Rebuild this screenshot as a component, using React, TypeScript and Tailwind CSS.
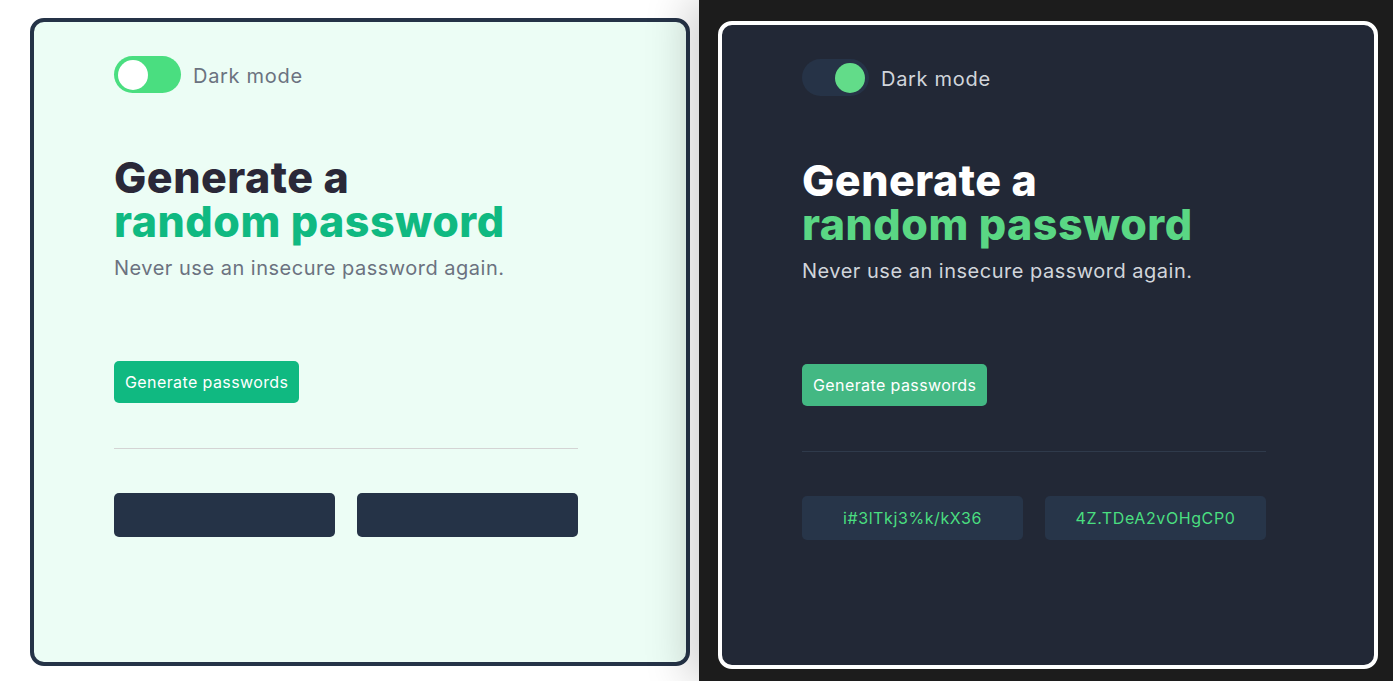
import React from "react";

function Card({ dark }: { dark: boolean }) {
  return (
    <div
      className={
        "w-[660px] h-[648px] rounded-[14px] border-4 pl-[80px] pt-[34px] " +
        (dark ? "border-white bg-[#222836]" : "border-[#253347] bg-[#ecfdf5]")
      }
    >
      <div className="w-[464px]">
        <div className="flex items-center gap-3 h-[37px]">
          <div
            className={
              "w-[67px] h-[37px] rounded-full flex items-center px-1 " +
              (dark ? "bg-[#263347] justify-end" : "bg-[#4ade80] justify-start")
            }
          >
            <div
              className={
                "w-[30px] h-[30px] rounded-full " + (dark ? "bg-[#62dc89]" : "bg-white")
              }
            />
          </div>
          <span
            className={
              "mt-[3px] text-[20px] tracking-[0.7px] " + (dark ? "text-[#d1d5db]" : "text-[#6b7280]")
            }
          >
            Dark mode
          </span>
        </div>
        <h1 className="mt-[62px] text-[43px] leading-[44px] font-extrabold tracking-[0.5px]">
          <span className={dark ? "text-white" : "text-[#2a2838]"}>Generate a</span>
          <br />
          <span className={dark ? "text-[#5ad784]" : "text-[#10b981]"}>random password</span>
        </h1>
        <p
          className={
            "mt-[12px] text-[20px] leading-[26px] tracking-[0.5px] " +
            (dark ? "text-[#d1d5db]" : "text-[#6b7280]")
          }
        >
          Never use an insecure password again.
        </p>
        <button
          className={
            "mt-[80px] h-[42px] px-[11px] rounded-[5px] text-[16px] tracking-[0.4px] text-white " +
            (dark ? "bg-[#43b883]" : "bg-[#10b981]")
          }
        >
          Generate passwords
        </button>
        <div
          className={"mt-[45px] h-px " + (dark ? "bg-[#2f3a4b]" : "bg-[#d4d4d4]")}
        />
        <div className="mt-[44px] grid grid-cols-2 gap-[22px]">
          {(dark ? ["i#3lTkj3%k/kX36", "4Z.TDeA2vOHgCP0"] : ["", ""]).map((p, i) => (
            <div
              key={i}
              className={
                "h-[44px] rounded-[5px] flex items-center justify-center text-[16px] tracking-[0.6px] text-[#4ade80] " +
                (dark ? "bg-[#273549]" : "bg-[#253347]")
              }
            >
              {p}
            </div>
          ))}
        </div>
      </div>
    </div>
  );
}

export default function App() {
  return (
    <div
      className="flex w-[1393px] h-[681px] overflow-hidden"
      style={{ fontFamily: "Inter, 'Noto Sans', sans-serif" }}
    >
      <div className="w-[699px] shrink-0 bg-white pt-[18px] pl-[30px]">
        <Card dark={false} />
      </div>
      <div className="relative z-10 flex-1 bg-[#1c1c1c] pt-[21px] pl-[19px] shadow-[-12px_0_40px_rgba(0,0,0,0.18)]">
        <Card dark={true} />
      </div>
    </div>
  );
}
